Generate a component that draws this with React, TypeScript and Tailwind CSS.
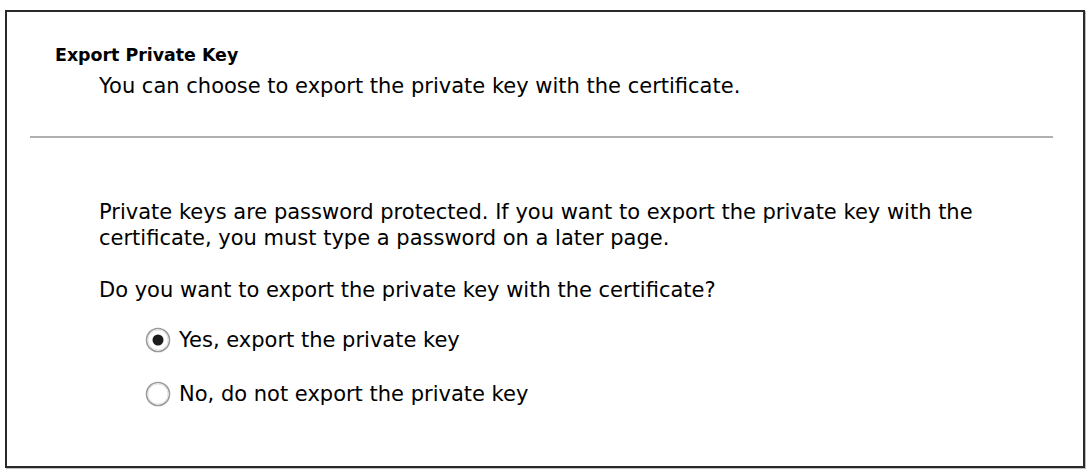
import React from "react";

function Radio({ checked }: { checked: boolean }) {
  return (
    <svg width="26" height="26" viewBox="0 0 26 26" className="shrink-0">
      <circle cx="13" cy="13" r="11.5" fill="#fff" stroke="#9a9a9a" strokeWidth="1.6" />
      <circle cx="13" cy="13" r="10" fill="none" stroke="#e4e4e4" strokeWidth="1" />
      {checked && <circle cx="13" cy="13" r="5.5" fill="#1c1c1c" />}
    </svg>
  );
}

export default function App() {
  return (
    <div
      className="w-[1090px] h-[473px] bg-white pt-[10px] pl-[5px]"
      style={{ fontFamily: '"DejaVu Sans", Tahoma, sans-serif' }}
    >
      <div className="w-[1080px] h-[458px] border-2 border-[#2a2a2a] shadow-[1px_1px_0_#bdbdbd] flex flex-col text-black">
        <div className="pl-[48px] pt-[33px] text-[17.4px] font-bold leading-[20px]">Export Private Key</div>
        <div className="pl-[92px] pt-[9px] text-[21px] leading-[24px]">
          You can choose to export the private key with the certificate.
        </div>
        <div className="mt-[38px] ml-[23px] mr-[30px] h-[2px] bg-[#b0b0b0]" />
        <div className="pl-[92px] pt-[61px] text-[21px] leading-[26px]">
          <p>Private keys are password protected. If you want to export the private key with the</p>
          <p>certificate, you must type a password on a later page.</p>
          <p className="mt-[26px]">Do you want to export the private key with the certificate?</p>
          <div className="flex flex-col gap-[28px] mt-[24px] pl-[46px]">
            <div className="flex items-center gap-[8px] h-[26px]">
              <Radio checked />
              <span>Yes, export the private key</span>
            </div>
            <div className="flex items-center gap-[8px] h-[26px]">
              <Radio checked={false} />
              <span>No, do not export the private key</span>
            </div>
          </div>
        </div>
      </div>
    </div>
  );
}
